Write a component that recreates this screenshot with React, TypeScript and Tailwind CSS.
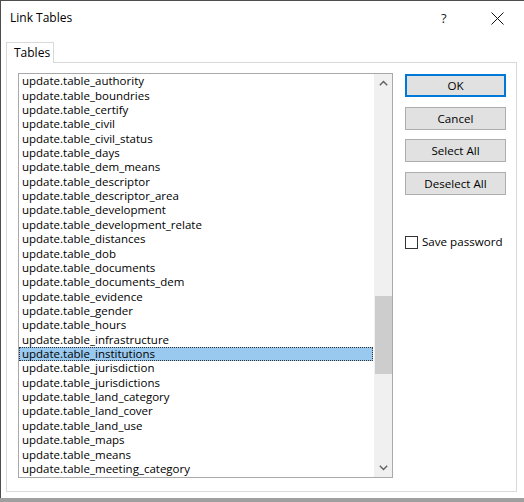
import React from "react";

const items = [
  "authority","boundries","certify","civil","civil_status","days","dem_means","descriptor","descriptor_area","development","development_relate","distances","dob","documents","documents_dem","evidence","gender","hours","infrastructure","institutions","jurisdiction","jurisdictions","land_category","land_cover","land_use","maps","means","meeting_category",
];

function Btn({ label, primary }: { label: string; primary?: boolean }) {
  return (
    <div
      className={
        "w-[101px] h-[23px] flex items-center justify-center bg-[#e1e1e1] text-[11.6px] text-black " +
        (primary ? "border-2 border-[#0078d7]" : "border border-[#adadad]")
      }
    >
      {label}
    </div>
  );
}

export default function App() {
  return (
    <div
      className="w-[524px] h-[502px] flex flex-col bg-white text-black overflow-hidden"
      style={{ fontFamily: '"Open Sans", "Noto Sans", sans-serif' }}
    >
      <div className="flex-1 flex flex-col border-l border-t border-[#4d4d4d]">
        {/* title bar */}
        <div className="h-[40px] flex items-start pt-[9px] pl-[9px] relative">
          <span className="text-[12px] leading-[16px]">Link Tables</span>
          <span className="absolute left-[440px] top-[9px] text-[13px] leading-[16px] text-[#222]">?</span>
          <svg className="absolute left-[490px] top-[11px]" width="13" height="13" viewBox="0 0 13 13">
            <path d="M0.5 0.5 L12.5 12.5 M12.5 0.5 L0.5 12.5" stroke="#111" strokeWidth="1" fill="none" />
          </svg>
        </div>
        {/* tab strip */}
        <div className="ml-[5px] flex">
          <div className="w-[48px] h-[21px] border border-b-0 border-[#d9d9d9] bg-white flex items-center pl-[7px] text-[12px] relative top-[1px]">
            Tables
          </div>
        </div>
        {/* panel */}
        <div className="ml-[5px] w-[511px] h-[430px] border border-[#d9d9d9] flex items-start pl-[11px] pt-[10px]">
          {/* listbox */}
          <div className="w-[375px] h-[405px] border border-[#a9a9a9] flex">
            <div className="flex-1 flex flex-col overflow-hidden">
              {items.map((it) => {
                const sel = it === "institutions";
                return (
                  <div
                    key={it}
                    className={
                      "h-[14.37px] shrink-0 flex items-center pl-[2px] mr-[1px] text-[11.5px] leading-[14px] whitespace-nowrap " +
                      (sel ? "bg-[#99c9ef] border border-dotted border-[#333]" : "border border-transparent")
                    }
                  >
                    update.table_{it}
                  </div>
                );
              })}
            </div>
            {/* scrollbar */}
            <div className="w-[18px] bg-[#f0f0f0] flex flex-col items-center">
              <div className="h-[18px] w-full flex items-center justify-center">
                <svg width="9" height="6" viewBox="0 0 9 6">
                  <path d="M0.8 5.2 L4.5 1.5 L8.2 5.2" stroke="#606060" strokeWidth="1.4" fill="none" />
                </svg>
              </div>
              <div className="h-[204px]" />
              <div className="w-[17px] h-[78px] bg-[#cdcdcd]" />
              <div className="flex-1" />
              <div className="h-[18px] w-full flex items-center justify-center">
                <svg width="9" height="6" viewBox="0 0 9 6">
                  <path d="M0.8 0.8 L4.5 4.5 L8.2 0.8" stroke="#606060" strokeWidth="1.4" fill="none" />
                </svg>
              </div>
            </div>
          </div>
          {/* right column */}
          <div className="ml-[12px] mt-[1px] flex flex-col">
            <Btn label="OK" primary />
            <div className="h-[10px]" />
            <Btn label="Cancel" />
            <div className="h-[9px]" />
            <Btn label="Select All" />
            <div className="h-[10px]" />
            <Btn label="Deselect All" />
            <div className="mt-[39px] flex items-center">
              <div className="w-[13px] h-[13px] border border-[#333] bg-white" />
              <span className="ml-[4px] text-[11.6px] leading-[16px]">Save password</span>
            </div>
          </div>
        </div>
        <div className="flex-1" />
      </div>
      <div className="h-[4px] bg-[#a0a0a0]" />
    </div>
  );
}
